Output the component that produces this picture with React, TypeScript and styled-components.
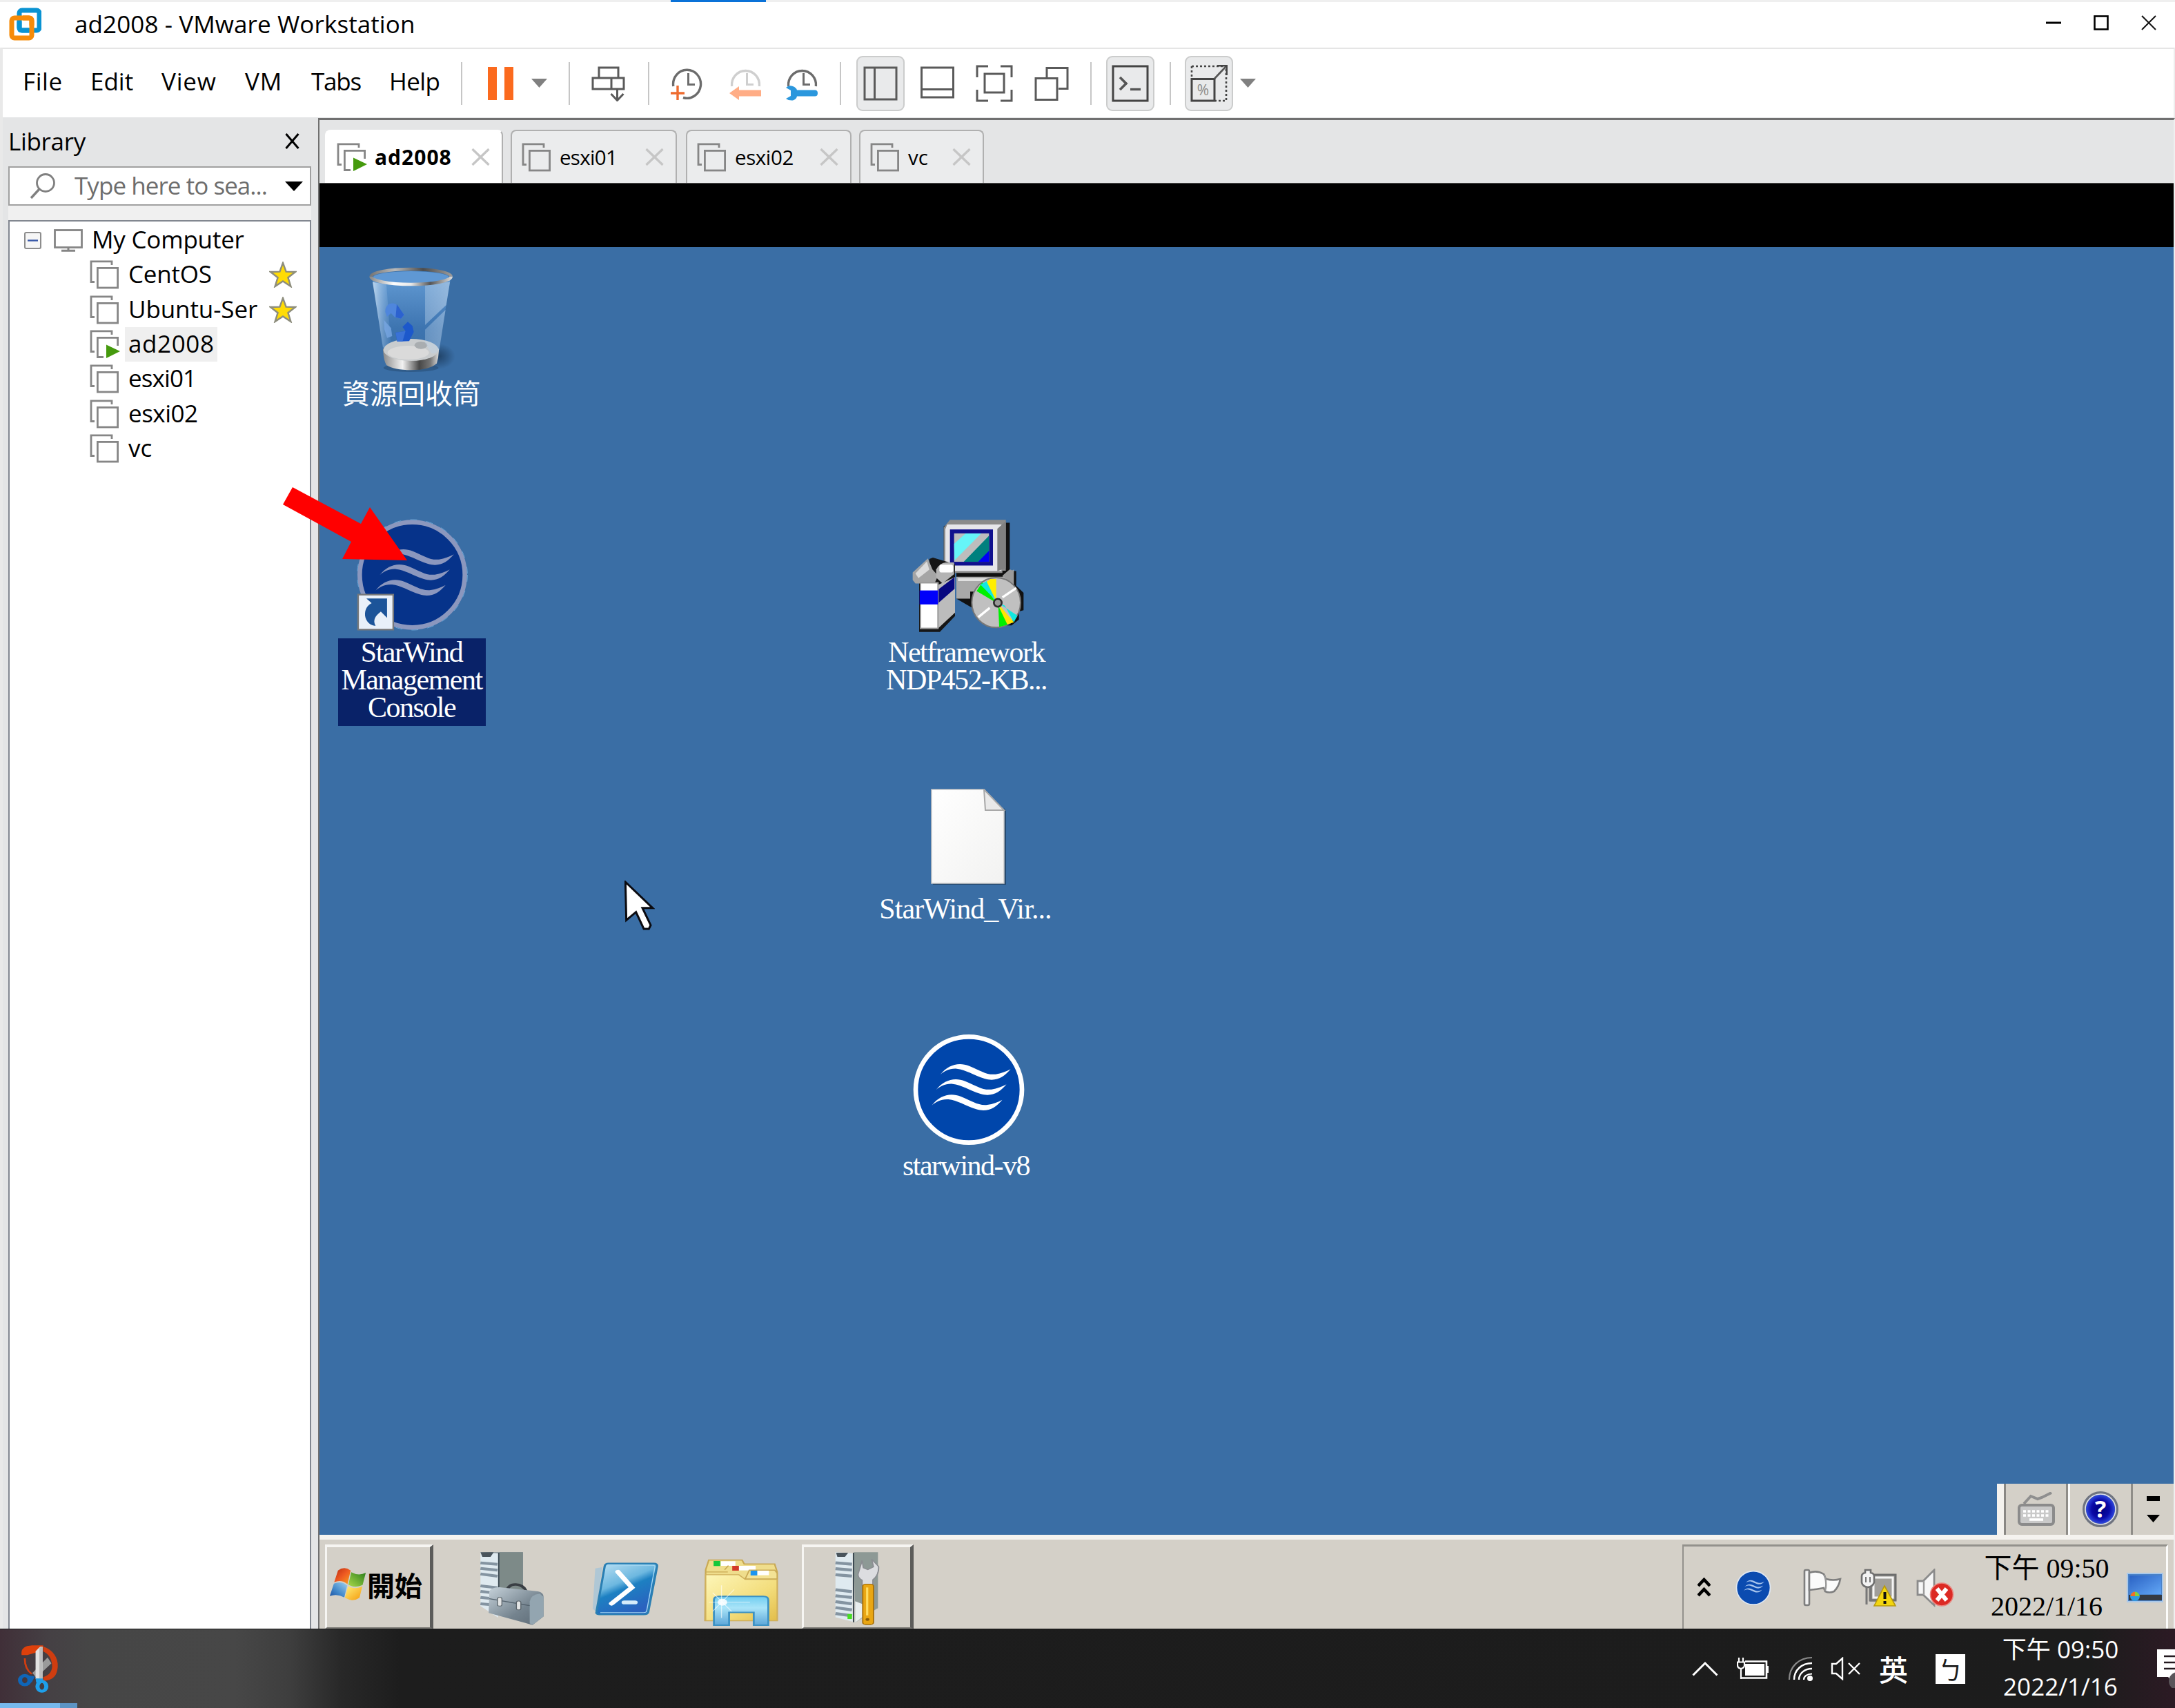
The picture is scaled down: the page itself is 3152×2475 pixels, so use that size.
import React from 'react';
import styled, { createGlobalStyle, css } from 'styled-components';

const GlobalStyle = createGlobalStyle`
  * { box-sizing: border-box; }
  html, body { margin: 0; padding: 0; background: #fff; }
  body { font-family: 'Open Sans', 'Noto Sans CJK TC', sans-serif; font-size: 35px; color: #000; }
  svg { display: block; flex: none; }
`;

/* ---------- shared pieces ---------- */

const Screen = styled.div`
  position: relative;
  display: flex;
  flex-direction: column;
  width: 3152px;
  height: 2475px;
  overflow: hidden;
`;

const Label = styled.span<{ $ls?: number }>`
  white-space: nowrap;
  letter-spacing: ${(p) => p.$ls ?? 0}px;
`;

const Slot = styled.div<{ $ml: number; $w?: number }>`
  flex: none;
  display: flex;
  align-items: center;
  justify-content: center;
  margin-left: ${(p) => p.$ml}px;
  ${(p) => p.$w && css`width: ${p.$w}px;`}
`;

const Spacer = styled.div`
  flex: 1;
`;

type ArtProps = { w: number; h: number; box?: string; children: React.ReactNode };
const Art = ({ w, h, box, children }: ArtProps) => (
  <svg width={w} height={h} viewBox={box ?? `0 0 ${w} ${h}`} preserveAspectRatio="none" fill="none">
    {children}
  </svg>
);

/* ---------- title bar ---------- */

const TopStrip = styled.div`
  flex: none;
  display: flex;
  height: 3px;
  background: #efefef;
`;

const ActiveMark = styled.div`
  width: 138px;
  margin-left: 972px;
  background: #0a72d8;
`;

const TitleBar = styled.header`
  flex: none;
  display: flex;
  align-items: center;
  height: 66px;
  padding: 0 27px 2px 13px;
  background: #fff;
`;

const TitleText = styled(Label)`
  margin-left: 48px;
  font-size: 35px;
  line-height: 48px;
`;

const WindowButtons = styled.div`
  display: flex;
  align-items: center;
  gap: 47px;
  margin-left: auto;
  padding-bottom: 4px;
`;

const VmwareLogo = () => (
  <Art w={47} h={48}>
    <rect x="15" y="4" width="29" height="29" rx="4" stroke="#0a93d2" strokeWidth="7" />
    <rect x="4" y="15" width="29" height="29" rx="4" stroke="#f68b09" strokeWidth="7" />
    <path d="M15 20V29Q15 33 19 33H29" stroke="#0a93d2" strokeWidth="7" />
    <path d="M20 15H29Q33 15 33 19V26" stroke="#f68b09" strokeWidth="7" />
  </Art>
);

/* ---------- menu and toolbar ---------- */

const Toolbar = styled.nav`
  flex: none;
  display: flex;
  align-items: center;
  height: 101px;
  padding: 0 0 0 28px;
  border-top: 2px solid #e5e5e5;
  border-left: 4px solid #e9e9e9;
  border-right: 2px solid #ededed;
  background: #fff;
`;

const MenuItem = styled.div<{ $w: number }>`
  flex: none;
  width: ${(p) => p.$w}px;
  padding: 0 0 5px 1px;
  line-height: 48px;
`;

const Separator = styled.div<{ $ml: number }>`
  flex: none;
  width: 2px;
  height: 62px;
  margin-left: ${(p) => p.$ml}px;
  background: #c6c6c6;
`;

const Pressed = styled.div<{ $ml: number }>`
  flex: none;
  display: flex;
  align-items: center;
  justify-content: center;
  width: 70px;
  height: 80px;
  margin-left: ${(p) => p.$ml}px;
  border: 2px solid #cbcccc;
  border-radius: 9px;
  background: #e9eaeb;
`;

const Caret = ({ color = '#808080', w = 23, h = 13 }) => (
  <Art w={w} h={h}>
    <path d={`M0 0H${w}L${w / 2} ${h}Z`} fill={color} />
  </Art>
);

const INK = '#5a5a5a';

const ClockFace = ({ color, full }: { color: string; full?: boolean }) => (
  <>
    <path
      d={full ? 'M5.8 29A20 20.5 0 1 1 20 45.5' : 'M5.6 29A20 20.5 0 1 1 45.4 29'}
      stroke={color}
      strokeWidth="3.4"
    />
    <path d="M27.5 10V26.5H37" stroke={color} strokeWidth="3" />
  </>
);

/* ---------- library ---------- */

const Main = styled.main`
  flex: 1;
  display: flex;
  min-height: 0;
  background: #e4e5e6;
`;

const Library = styled.aside`
  flex: none;
  display: flex;
  flex-direction: column;
  width: 461px;
  padding: 0 10px 0 8px;
  border-left: 4px solid #e9e9e9;
`;

const LibraryHeader = styled.div`
  display: flex;
  align-items: center;
  justify-content: space-between;
  height: 71px;
  padding: 0 17px 2px 0;
`;

const SearchBox = styled.div`
  flex: none;
  display: flex;
  align-items: center;
  height: 57px;
  padding-left: 29px;
  border: 2px solid #a0a0a0;
  background: #fff;
  color: #6d6d6d;
`;

const SearchHint = styled(Label)`
  width: 305px;
  margin-left: 27px;
  padding-bottom: 1px;
  line-height: 46px;
`;

const SearchGap = styled.div`
  flex: none;
  height: 21px;
  background: #f0f0f0;
`;

const Tree = styled.div`
  flex: 1;
  padding-top: 2px;
  border: 2px solid #828790;
  border-bottom: 0;
  background: #fff;
`;

const TreeRow = styled.div<{ $indent: number }>`
  display: flex;
  align-items: center;
  height: 50.3px;
  padding-left: ${(p) => p.$indent}px;
`;

const TreeText = styled(Label)<{ $selected?: boolean; $ml?: number }>`
  margin-left: ${(p) => p.$ml ?? 9}px;
  padding: 0 4px 3px 5px;
  line-height: 47px;
  background: ${(p) => (p.$selected ? '#efefef' : 'transparent')};
`;

const StarSlot = styled.div`
  margin-left: auto;
  margin-right: 19px;
`;

const VmIcon = ({ running }: { running?: boolean }) => (
  <Art w={44} h={42}>
    <path d="M7 31.5H2V1.8H32V7" stroke="#868686" strokeWidth="2.8" />
    {running ? (
      <>
        <path d="M20 39.5H11.4V11.4H40.6V23" stroke="#868686" strokeWidth="2.8" />
        <path d="M24 21.5L44 31L24 41Z" fill="#459a0d" />
      </>
    ) : (
      <rect x="11.4" y="11.4" width="29.2" height="28.6" stroke="#868686" strokeWidth="2.8" />
    )}
  </Art>
);

const Star = () => (
  <Art w={40} h={38}>
    <path
      d="M20 2L24.6 14.6L38 15L27.4 23.2L31.4 36L20 28.4L8.6 36L12.6 23.2L2 15L15.4 14.6Z"
      fill="#ffdc05"
      stroke="#8d8d7c"
      strokeWidth="2.4"
    />
  </Art>
);

/* ---------- guest pane ---------- */

const Pane = styled.section`
  flex: none;
  display: flex;
  flex-direction: column;
  width: 2691px;
  margin-top: 1px;
  border-top: 3px solid #707070;
  border-left: 2px solid #707070;
  border-right: 2px solid #efefef;
`;

const Tabs = styled.div`
  flex: none;
  display: flex;
  align-items: flex-end;
  height: 92px;
  padding-left: 8px;
  border-bottom: 1px solid #555;
`;

const Tab = styled.div<{ $w: number; $gap: number; $active?: boolean }>`
  display: flex;
  align-items: center;
  width: ${(p) => p.$w}px;
  height: 77px;
  margin-right: ${(p) => p.$gap}px;
  padding: 0 17px 0 ${(p) => (p.$active ? 15 : 14)}px;
  border: 2px solid #b0b0b0;
  border-bottom: 0;
  border-radius: 8px 8px 0 0;
  background: ${(p) => (p.$active ? '#fff' : '#ebeced')};
  font-size: ${(p) => (p.$active ? 30 : 29.5)}px;
  font-weight: ${(p) => (p.$active ? 700 : 400)};
  ${(p) => p.$active && css`border-color: #fff #b0b0b0 #fff #fff;`}
`;

const TabText = styled(Label)`
  flex: 1;
  margin-left: 11px;
  line-height: 40px;
`;

const CloseX = ({ w, h, color, sw = 3 }: { w: number; h: number; color: string; sw?: number }) => (
  <Art w={w} h={h}>
    <path d={`M1.5 1L${w - 1.5} ${h - 1}M${w - 1.5} 1L1.5 ${h - 1}`} stroke={color} strokeWidth={sw} />
  </Art>
);

const Letterbox = styled.div`
  flex: none;
  height: 92px;
  background: #000;
`;

const Desktop = styled.div`
  position: relative;
  flex: none;
  height: 1866px;
  background: #3a6ea5;
`;

const DesktopItem = styled.div<{ $x: number; $y: number }>`
  position: absolute;
  left: ${(p) => p.$x - 150}px;
  top: ${(p) => p.$y}px;
  display: flex;
  flex-direction: column;
  align-items: center;
  width: 300px;
`;

const ItemLabel = styled.div<{ $mt: number; $mr?: number; $ls?: number; $selected?: boolean; $cjk?: boolean }>`
  margin-top: ${(p) => p.$mt}px;
  margin-right: ${(p) => p.$mr ?? 0}px;
  padding: ${(p) => (p.$selected ? '0 5px 7px 4px' : '0')};
  background: ${(p) => (p.$selected ? '#092268' : 'transparent')};
  color: #fff;
  font-family: ${(p) => (p.$cjk ? "'Noto Sans CJK TC'" : "'Liberation Serif', 'Noto Sans CJK TC'")}, serif;
  font-size: ${(p) => (p.$cjk ? 40 : 42)}px;
  line-height: 40px;
  letter-spacing: ${(p) => p.$ls ?? -1.5}px;
  text-align: center;
  white-space: pre;
`;

const WAVE =
  'M450 432C485 388 530 376 576 394C625 414 650 434 690 430C715 427 735 418 755 408C725 444 690 464 642 449C592 432 560 410 522 406C490 404 470 415 450 432Z';

const Waves = ({ color }: { color: string }) => (
  <g fill={color}>
    <path d={WAVE} transform="translate(18 -66)" />
    <path d={WAVE} />
    <path d={WAVE} transform="translate(-18 67)" />
  </g>
);

const StarWindSelected = () => (
  <Art w={161} h={163} box="350 188 484 489">
    <circle cx="592" cy="431" r="229" fill="#06338a" stroke="#8b97be" strokeWidth="20" />
    <circle cx="592" cy="431" r="240" stroke="#6aa5d5" strokeWidth="3" strokeDasharray="30 40" />
    <Waves color="#8b97be" />
    <rect x="356" y="517" width="153" height="152" fill="#e9f0f9" stroke="#77787a" strokeWidth="7" />
    <path
      d="M392 534H482V618L455 591C432 608 418 628 432 653C400 650 384 622 386 598C388 574 402 560 415 554Z"
      fill="#1c5499"
    />
  </Art>
);

const StarWindRound = ({ w, h }: { w: number; h: number }) => (
  <Art w={w} h={h} box="350 188 484 489">
    <circle cx="592" cy="431" r="230" fill="#0046ab" stroke="#fff" strokeWidth="20" />
    <Waves color="#fff" />
  </Art>
);

const RecycleBin = () => (
  <Art w={126} h={153} box="230 140 378 459">
    <defs>
      <linearGradient id="rim" x1="0" x2="1">
        <stop offset="0" stopColor="#8d8d8d" />
        <stop offset=".28" stopColor="#fdfdfd" />
        <stop offset=".5" stopColor="#e8e8e8" />
        <stop offset=".74" stopColor="#555" />
        <stop offset="1" stopColor="#d5d5d5" />
      </linearGradient>
      <linearGradient id="rimBack" x1="0" x2="1">
        <stop offset="0" stopColor="#777" />
        <stop offset=".3" stopColor="#b9b9b9" />
        <stop offset=".65" stopColor="#4c4c4c" />
        <stop offset="1" stopColor="#999" />
      </linearGradient>
      <linearGradient id="base" x1="0" x2="1">
        <stop offset="0" stopColor="#8a8a8a" />
        <stop offset=".35" stopColor="#f2f2f2" />
        <stop offset=".65" stopColor="#474747" />
        <stop offset=".85" stopColor="#777" />
        <stop offset="1" stopColor="#ddd" />
      </linearGradient>
      <linearGradient id="glass" x1="0" y1="0" x2="0" y2="1">
        <stop offset="0" stopColor="#5f97d0" />
        <stop offset=".6" stopColor="#3d74b0" />
        <stop offset="1" stopColor="#3a6ea5" />
      </linearGradient>
      <linearGradient id="shineL" x1="0" x2="1">
        <stop offset="0" stopColor="#dcebf8" stopOpacity=".75" />
        <stop offset="1" stopColor="#9cc3ea" stopOpacity=".08" />
      </linearGradient>
      <linearGradient id="shineR" x1="0" x2="1">
        <stop offset="0" stopColor="#bcd3ea" stopOpacity=".4" />
        <stop offset="1" stopColor="#bcd3ea" stopOpacity=".6" />
      </linearGradient>
      <radialGradient id="binShade">
        <stop offset="0" stopColor="#1d3d60" stopOpacity=".9" />
        <stop offset="1" stopColor="#1d3d60" stopOpacity="0" />
      </radialGradient>
    </defs>
    <ellipse cx="530" cy="528" rx="74" ry="56" fill="url(#binShade)" />
    <ellipse cx="412" cy="578" rx="120" ry="18" fill="#23476d" opacity=".5" />
    <path d="M245 195L290 500Q412 600 533 500L583 195Z" fill="url(#glass)" />
    <path d="M245 205L290 490L325 480L305 215Z" fill="url(#shineL)" />
    <path d="M290 495Q292 545 305 566Q340 588 412 588Q495 588 524 558Q533 530 533 495Z" fill="url(#base)" />
    <ellipse cx="412" cy="500" rx="120" ry="48" fill="#c9ccce" />
    <ellipse cx="400" cy="512" rx="90" ry="30" fill="#dadada" />
    <ellipse cx="455" cy="480" rx="28" ry="16" fill="#a9adb0" />
    <path d="M473 212L581 205L565 305L473 392Z" fill="url(#shineR)" />
    <path d="M473 412L562 326L535 498Q520 520 500 515L473 470Z" fill="url(#shineR)" opacity=".8" />
    <path d="M300 335C300 305 320 292 345 300L383 348L368 364L342 358L325 340L308 356Z" fill="#4f86dc" />
    <path d="M350 302L382 348L368 364L345 358Z" fill="#2c62cf" />
    <path d="M398 378L375 400L388 418L345 425L352 464L404 462L424 422L418 396Z" fill="#1c58cb" />
    <path d="M345 425L388 418L375 464H352Z" fill="#3a72d6" />
    <path d="M294 370L325 405L330 440L308 448L296 410Z" fill="#78a6e2" opacity=".8" />
    <path d="M238 181A174 32 0 0 1 586 181" stroke="url(#rimBack)" strokeWidth="13" />
    <ellipse cx="412" cy="183" rx="164" ry="25" fill="#5f98d4" />
    <path d="M238 181A174 34 0 0 0 586 181" stroke="url(#rim)" strokeWidth="14" />
  </Art>
);

const Installer = () => (
  <Art w={165} h={165} box="245 68 495 489">
    <path d="M410 84H672V290L700 292V355L732 385V460L712 465V500L680 525H640L440 410V300L385 255V100Z" fill="#111" />
    <path d="M385 104L412 72H655V290H640V300H385Z" fill="#8b8b8b" />
    <path d="M400 92H636V292H392V112Z" fill="#e6e6ea" />
    <path d="M618 110L655 78V280L618 292Z" fill="#808080" />
    <rect x="412" y="113" width="187" height="155" fill="#10108e" />
    <rect x="430" y="130" width="152" height="122" fill="#bdbdbd" />
    <path d="M430 175L480 130H548L432 246Z" fill="#66f5f8" />
    <path d="M582 140V252H472Z" fill="#00807e" />
    <path d="M582 204V252H535Z" fill="#0000f5" />
    <path d="M440 316H640L690 285L684 380H500V410H440Z" fill="#a9a9a9" />
    <path d="M640 312L672 284L690 292V350Z" fill="#9a9a9a" />
    <path d="M447 322H600L560 335H447Z" fill="#e0e0e0" />
    <ellipse cx="613" cy="427" rx="106" ry="107" fill="#c0c0c0" stroke="#777" strokeWidth="6" />
    <path d="M613 427L528 378L552 340Z" fill="#00f000" />
    <path d="M613 420L545 350L572 335Z" fill="#10e8e0" />
    <path d="M613 420L572 338L588 326H613Z" fill="#ffee00" />
    <path d="M620 427L705 483L690 512L650 440Z" fill="#10e8e0" />
    <path d="M622 432L690 512L655 522Z" fill="#ffe600" />
    <path d="M622 440L662 522L626 532Z" fill="#00f000" />
    <path d="M640 405L700 365M585 450L535 490" stroke="#fff" strokeWidth="10" />
    <circle cx="620" cy="428" r="17" fill="#999" stroke="#2d2d2d" strokeWidth="8" />
    <path d="M278 553H368L434 485V262L338 234L322 240V270L278 330Z" fill="#161616" />
    <path d="M250 298L316 238L336 285L360 312L345 345H262L250 330Z" fill="#a5a5a5" />
    <path d="M262 302L312 250L322 286L275 322Z" fill="#dcdcdc" />
    <path d="M352 285Q370 255 395 255H430V305L380 345L352 320Z" fill="#b4b4b4" />
    <rect x="366" y="264" width="60" height="34" rx="10" fill="#fff" />
    <path d="M362 350L434 318V470L362 536Z" fill="#bcbcbc" />
    <path d="M360 372L432 318V368L360 430Z" fill="#080880" />
    <rect x="284" y="342" width="76" height="196" fill="#fff" stroke="#9a9a9a" strokeWidth="6" />
    <rect x="280" y="375" width="80" height="60" fill="#0000fa" />
  </Art>
);

const BlankFile = () => (
  <Art w={110} h={140}>
    <defs>
      <linearGradient id="paper" x1="0" y1="0" x2="1" y2="1">
        <stop offset="0" stopColor="#fff" />
        <stop offset="1" stopColor="#f2f2f1" />
      </linearGradient>
    </defs>
    <path d="M3 139H109V32L106 28V136H3Z" fill="#274b70" />
    <path d="M1 1H77L106 31V137H1Z" fill="url(#paper)" stroke="#c9c9c9" strokeWidth="1.5" />
    <path d="M77 1L106 31H79Z" fill="#e9e9e9" stroke="#a8a8a8" strokeWidth="2" />
  </Art>
);

const Cursor = styled.div`
  position: absolute;
  left: 442px;
  top: 918px;
`;

const LanguageBar = styled.div`
  position: absolute;
  right: 0;
  bottom: 0;
  display: flex;
  align-items: center;
  width: 256px;
  height: 74px;
  background: #d4d0c8;
  border-left: 10px solid #f4f2ee;
`;

const BarCell = styled.div<{ $w: number; $first?: boolean }>`
  display: flex;
  flex-direction: column;
  align-items: center;
  justify-content: center;
  width: ${(p) => p.$w}px;
  height: 74px;
  border-left: ${(p) => (p.$first ? '3px solid #8a8884' : '3px solid #fbfbfa')};
  border-right: 3px solid #8f8d88;
`;

/* ---------- guest taskbar ---------- */

const GuestTaskbar = styled.div`
  flex: 1;
  display: flex;
  align-items: flex-end;
  min-height: 0;
  padding-right: 8px;
  border-top: 7px solid #f5f3ef;
  background: #d4d0c8;
`;

const raised = css`
  border-style: solid;
  border-width: 4px 5px 2px 3px;
  border-color: #f6f5f2 #5c5c5a #7d7b77 #f6f5f2;
`;

const StartButton = styled.button`
  ${raised}
  flex: none;
  display: flex;
  align-items: center;
  width: 157px;
  height: 122px;
  margin: 0 0 0 8px;
  padding: 0 0 9px 3px;
  background: #d4d0c8;
  color: #000;
  font: 700 40px/44px 'Noto Sans CJK TC', sans-serif;
`;

const StartText = styled.span`
  margin-left: 1px;
  white-space: nowrap;
`;

const TaskSlot = styled.div<{ $ml: number; $drop: number; $pressed?: boolean }>`
  flex: none;
  display: flex;
  align-items: flex-start;
  justify-content: center;
  height: 122px;
  margin-left: ${(p) => p.$ml}px;
  ${(p) => p.$pressed && css`${raised} width: 162px;`}
  padding-top: ${(p) => p.$drop}px;
`;

const GuestTray = styled.div`
  flex: none;
  display: flex;
  align-items: center;
  width: 704px;
  height: 122px;
  border-top: 3px solid #93918c;
  border-left: 2px solid #93918c;
  border-right: 3px solid #fbfbfa;
`;

const GuestClock = styled.div`
  width: 200px;
  margin-left: 34px;
  padding-bottom: 2px;
  font-family: 'Liberation Serif', 'Noto Sans CJK TC', serif;
  font-size: 40px;
  line-height: 55px;
  text-align: center;
  white-space: nowrap;
`;

const ServerTower = () => (
  <>
    <path d="M82 116H215V350L140 355L82 350Z" fill="#7f8d93" />
    <path d="M140 116H214V352H140Z" fill="#7d8a88" />
    <path d="M80 116L136 120V400L80 350Z" fill="#dfeaf0" />
    <path d="M80 116H122L112 136H86Z" fill="#49545c" />
    <path
      d="M80 162L134 168M80 186L134 194M80 210L134 220M80 262L134 270M80 286L134 294M80 312L134 320M80 340L134 346"
      stroke="#8494a1"
      strokeWidth="12"
    />
    <path d="M138 118V350" stroke="#3c4a53" strokeWidth="4" />
  </>
);

const ServerManager = () => (
  <Art w={96} h={108} box="75 112 210 324">
    <defs>
      <linearGradient id="toolbox" x1="0" y1="0" x2="1" y2="1">
        <stop offset="0" stopColor="#c6d2da" />
        <stop offset=".6" stopColor="#74838e" />
        <stop offset="1" stopColor="#5c6a75" />
      </linearGradient>
    </defs>
    <ServerTower />
    <path d="M162 290Q168 254 192 256Q224 258 228 306" stroke="#3a3f44" strokeWidth="10" />
    <path d="M108 288Q112 268 140 268L262 286Q280 290 280 310V395L245 432L106 380Z" fill="url(#toolbox)" />
    <path d="M236 330Q240 300 268 296L280 310V395L245 432L236 425Z" fill="#93a5b0" />
    <path d="M108 318L236 348" stroke="#55636e" strokeWidth="4" />
    <rect x="134" y="312" width="14" height="38" rx="6" fill="#e2e4e4" stroke="#59636a" strokeWidth="3" />
    <rect x="194" y="328" width="14" height="38" rx="6" fill="#e2e4e4" stroke="#59636a" strokeWidth="3" />
  </Art>
);

const PowerShell = () => (
  <Art w={97} h={80} box="430 156 212 240">
    <defs>
      <linearGradient id="ps" x1="0" y1="0" x2=".5" y2="1">
        <stop offset="0" stopColor="#bfe2f4" />
        <stop offset=".45" stopColor="#6db8e0" />
        <stop offset=".58" stopColor="#1d80c2" />
        <stop offset="1" stopColor="#2a62bf" />
      </linearGradient>
    </defs>
    <path d="M440 185L462 180L444 375L432 360Z" fill="#8fbfe0" opacity=".55" />
    <path
      d="M482 164H626Q637 164 636 176L608 374Q606 385 594 385H452Q442 385 444 374L470 176Q472 164 482 164Z"
      fill="url(#ps)"
      stroke="#2a7fb3"
      strokeWidth="7"
    />
    <path d="M482 172H624Q630 172 629 180L603 370Q602 377 594 377H456" stroke="#a5d8f2" strokeWidth="3" />
    <path d="M512 200L556 268L492 338" stroke="#fff" strokeWidth="17" strokeLinecap="round" />
    <path d="M532 333H566" stroke="#d6ecfa" strokeWidth="17" strokeLinecap="round" />
  </Art>
);

const Explorer = () => (
  <Art w={110} h={99} box="782 140 240 298">
    <defs>
      <linearGradient id="folder" x1="0" y1="0" x2="1" y2="1">
        <stop offset="0" stopColor="#fdf6b8" />
        <stop offset=".6" stopColor="#f3dd7c" />
        <stop offset="1" stopColor="#e2bd4a" />
      </linearGradient>
      <linearGradient id="stand" x1="0" y1="0" x2="0" y2="1">
        <stop offset="0" stopColor="#6fcdf0" />
        <stop offset=".4" stopColor="#a9e4f8" />
        <stop offset="1" stopColor="#5da6d8" />
      </linearGradient>
    </defs>
    <path d="M790 190L800 148H905L912 165H1008L1016 200V412H788Z" fill="#efdd8c" stroke="#c9a954" strokeWidth="5" />
    <path d="M838 163H884" stroke="#fff" strokeWidth="20" />
    <rect x="815" y="152" width="21" height="22" fill="#14c83a" />
    <path d="M850 190L862 172M792 200H860" stroke="#c9a954" strokeWidth="4" />
    <path d="M895 183H948" stroke="#fff" strokeWidth="20" />
    <rect x="874" y="173" width="21" height="21" fill="#d23a2a" />
    <path d="M790 212H895L915 232H1016V412H790Z" fill="url(#folder)" stroke="#d0b05c" strokeWidth="4" />
    <path d="M915 230L928 192H1008L1016 205V230Z" fill="#f3e295" stroke="#c9a954" strokeWidth="4" />
    <path d="M953 204H990" stroke="#fff" strokeWidth="20" />
    <rect x="932" y="194" width="21" height="21" fill="#1a94f0" />
    <path
      d="M816 432V322Q816 306 832 306H972Q988 306 988 322V432H942V376H864V432Z"
      fill="url(#stand)"
      stroke="#3c92c4"
      strokeWidth="6"
    />
    <path d="M840 258V400M800 332H930M812 290L872 372M880 276L812 372" stroke="#fff" strokeWidth="3" opacity=".6" />
    <circle cx="843" cy="332" r="15" fill="#fff" opacity=".85" />
  </Art>
);

const ServerTools = () => (
  <Art w={68} h={108} box="1194 112 148 326">
    <path d="M1258 116H1334V360L1262 424Z" fill="#8d9995" />
    <path d="M1262 330L1290 345V395L1262 424Z" fill="#e8eeee" />
    <path d="M1200 116L1254 120V420L1200 400Z" fill="#dfeaf0" />
    <path d="M1202 118H1240L1230 136H1206Z" fill="#49545c" />
    <path
      d="M1200 162L1252 168M1200 188L1252 194M1200 214L1252 220M1200 280L1252 288M1200 306L1252 314M1200 332L1252 342M1200 358L1252 368M1200 384L1252 394"
      stroke="#8494a1"
      strokeWidth="13"
    />
    <path d="M1257 118V422" stroke="#34424b" strokeWidth="4" />
    <rect x="1238" y="386" width="14" height="22" fill="#45df22" />
    <path
      d="M1284 152L1272 208Q1268 226 1284 238V262H1318V236Q1338 214 1336 178L1314 146L1320 180L1302 192L1288 184Z"
      fill="#dcdde0"
      stroke="#8b8d92"
      strokeWidth="4"
    />
    <rect x="1286" y="256" width="34" height="176" rx="9" fill="#e9a613" stroke="#a87008" strokeWidth="4" />
    <path d="M1300 270V392" stroke="#ffdd62" strokeWidth="7" />
    <circle cx="1301" cy="410" r="6" fill="#8a5d08" />
  </Art>
);

const WindowsFlag = () => (
  <Art w={54} h={49} box="1036 188 118 148">
    <defs>
      <linearGradient id="fr" x1="0" y1="0" x2="1" y2="1"><stop offset="0" stopColor="#b92a10" /><stop offset=".5" stopColor="#ee5a22" /><stop offset="1" stopColor="#f9a21c" /></linearGradient>
      <linearGradient id="fg" x1="1" y1="0" x2="0" y2="1"><stop offset="0" stopColor="#2c7f1c" /><stop offset="1" stopColor="#a9d94a" /></linearGradient>
      <linearGradient id="fb" x1="1" y1="0" x2="0" y2="1"><stop offset="0" stopColor="#9dd0ee" /><stop offset=".6" stopColor="#3f86c9" /><stop offset="1" stopColor="#1c4fa0" /></linearGradient>
      <linearGradient id="fy" x1="0" y1="0" x2="1" y2="1"><stop offset="0" stopColor="#fff07a" /><stop offset="1" stopColor="#f59a0a" /></linearGradient>
    </defs>
    <path d="M1064 202Q1084 182 1104 202L1094 262Q1074 240 1052 254Z" fill="url(#fr)" />
    <path d="M1106 210Q1130 228 1152 212L1142 266Q1118 282 1097 264Z" fill="url(#fg)" />
    <path d="M1051 260Q1074 246 1093 268L1084 320Q1062 302 1038 314Z" fill="url(#fb)" />
    <path d="M1096 270Q1118 288 1141 272L1132 322Q1112 342 1086 322Z" fill="url(#fy)" />
  </Art>
);

/* ---------- host taskbar ---------- */

const HostTaskbar = styled.footer`
  flex: none;
  display: flex;
  align-items: center;
  height: 115px;
  border-top: 1px solid #1a1a1a;
  background: linear-gradient(
    90deg,
    #402f38 0,
    #454044 70px,
    #464646 130px,
    #474747 340px,
    #3e3e3e 420px,
    #282828 495px,
    #1d1d1d 580px,
    #1c1c1c 3030px,
    #2c1a24 3152px
  );
  color: #fff;
`;

const PinnedApp = styled.div`
  display: flex;
  flex-direction: column;
  align-items: flex-start;
  justify-content: space-between;
  align-self: stretch;
  padding: 21px 0 0;

  svg { margin-left: 24px; }
`;

const RunningMark = styled.div`
  width: 112px;
  height: 7px;
  border-right: 25px solid #5c94c4;
  background: #76b9ed;
`;

const HostClock = styled.div`
  width: 180px;
  margin-left: 48px;
  padding-bottom: 3px;
  line-height: 54px;
  text-align: center;
  white-space: nowrap;
`;

const InputMode = styled.div`
  margin-left: 26px;
  width: 42px;
  font: 500 42px/50px 'Noto Sans CJK TC', sans-serif;
  text-align: center;
`;

const ImeBox = styled.div`
  display: flex;
  align-items: center;
  justify-content: center;
  width: 43px;
  height: 43px;
  margin-left: 40px;
  background: #fff;
  color: #1c1c1c;
  font: 400 36px/43px 'Noto Sans CJK TC', sans-serif;
`;

const PointerArrow = styled.div`
  position: absolute;
  left: 410px;
  top: 705px;
`;

/* ---------- data ---------- */

const MENU: [string, number, number][] = [
  ['File', 98, 0.6],
  ['Edit', 103, 0],
  ['View', 121, 0.8],
  ['VM', 96, 0.8],
  ['Tabs', 113, -1.2],
  ['Help', 105, -0.6],
];

const MACHINES = [
  { name: 'CentOS', star: true, ls: -0.2 },
  { name: 'Ubuntu-Ser', star: true, ls: -0.1 },
  { name: 'ad2008', running: true, ls: 0.6 },
  { name: 'esxi01', ls: -0.9 },
  { name: 'esxi02', ls: -0.5 },
  { name: 'vc', ls: 0 },
];

const TABS = [
  { name: 'ad2008', w: 258, gap: 11, active: true, ls: 1 },
  { name: 'esxi01', w: 241, gap: 13, ls: -0.7 },
  { name: 'esxi02', w: 240, gap: 11, ls: -0.4 },
  { name: 'vc', w: 181, gap: 0, ls: 0 },
];

export default function App() {
  return (
    <Screen>
      <GlobalStyle />
      <TopStrip>
        <ActiveMark />
      </TopStrip>

      <TitleBar>
        <VmwareLogo />
        <TitleText $ls={0.1}>ad2008 - VMware Workstation</TitleText>
        <WindowButtons>
          <Art w={22} h={22}><path d="M0 11H22" stroke="#000" strokeWidth="3" /></Art>
          <Art w={22} h={22}><rect x="1.5" y="1.5" width="19" height="19" stroke="#000" strokeWidth="2.6" /></Art>
          <Art w={22} h={22}><path d="M1 1L21 21M21 1L1 21" stroke="#111" strokeWidth="2" /></Art>
        </WindowButtons>
      </TitleBar>

      <Toolbar>
        {MENU.map(([text, w, ls]) => (
          <MenuItem key={text} $w={w}><Label $ls={ls}>{text}</Label></MenuItem>
        ))}
        <Separator $ml={0} />
        <Slot $ml={37}>
          <Art w={37} h={48}><path d="M0 0H13V48H0ZM24 0H37V48H24Z" fill="#fb6a1e" /></Art>
        </Slot>
        <Slot $ml={26}><Caret /></Slot>
        <Separator $ml={31} />
        <Slot $ml={31}>
          <Art w={50} h={52}>
            <g stroke={INK} strokeWidth="3">
              <path d="M11 18V3H39V18" />
              <rect x="2" y="18" width="45" height="16" />
              <path d="M29 18V34M37.5 34V50M28.5 41L37.5 50.5L46.5 41" />
            </g>
          </Art>
        </Slot>
        <Separator $ml={32} />
        <Slot $ml={29}>
          <Art w={50} h={50}>
            <ClockFace color="#6c6c6c" full />
            <path d="M2 39H22M12 28V49" stroke="#ee6c30" strokeWidth="3.4" />
          </Art>
        </Slot>
        <Slot $ml={35}>
          <Art w={50} h={50}>
            <ClockFace color="#cfcfcf" />
            <path d="M2 39L16 29V34.5H48V43.5H16V49Z" fill="#ffad86" />
          </Art>
        </Slot>
        <Slot $ml={32}>
          <Art w={50} h={50}>
            <ClockFace color="#6c6c6c" />
            <path d="M2 31Q6 27 12 29Q17 31 18 34.5H44Q48 34.5 48 39Q48 43.5 44 43.5H18Q17 48 12 49.5Q6 50 2 47L9 43V35Z" fill="#2b97dd" />
          </Art>
        </Slot>
        <Separator $ml={30} />
        <Pressed $ml={22}>
          <Art w={50} h={50}>
            <rect x="2" y="2" width="46" height="46" stroke={INK} strokeWidth="3" />
            <path d="M16.5 2V48" stroke={INK} strokeWidth="3" />
          </Art>
        </Pressed>
        <Slot $ml={23}>
          <Art w={49} h={50}>
            <rect x="1.5" y="2" width="46" height="43" stroke={INK} strokeWidth="3" />
            <path d="M2 33.5H48" stroke={INK} strokeWidth="3" />
          </Art>
        </Slot>
        <Slot $ml={31}>
          <Art w={54} h={54}>
            <path d="M2 18V2H18M36 2H52V18M52 36V52H36M18 52H2V36" stroke={INK} strokeWidth="3" />
            <rect x="13" y="13" width="28" height="27" stroke={INK} strokeWidth="3" />
          </Art>
        </Slot>
        <Slot $ml={31}>
          <Art w={50} h={50}>
            <path d="M18 17V2.5H48V32.5H35" stroke={INK} strokeWidth="3" />
            <rect x="2" y="17.5" width="31" height="31" stroke={INK} strokeWidth="3" />
          </Art>
        </Slot>
        <Separator $ml={31} />
        <Pressed $ml={21}>
          <Art w={54} h={54}>
            <rect x="2" y="2" width="50" height="50" stroke="#444" strokeWidth="3" />
            <path d="M12 18L21 27L12 36" stroke="#555" strokeWidth="3.6" />
            <path d="M27 35.5H42" stroke="#555" strokeWidth="3.4" />
          </Art>
        </Pressed>
        <Separator $ml={22} />
        <Pressed $ml={20}>
          <Art w={54} h={54}>
            <path d="M2 2H52V52H36M2 2V20" stroke="#444" strokeWidth="2.6" strokeDasharray="3 3" />
            <rect x="2" y="20.5" width="33" height="31.5" stroke="#444" strokeWidth="3" />
            <path d="M35 20L51 3" stroke="#555" strokeWidth="2.6" />
            <path d="M39 1H53V15" stroke="#444" strokeWidth="3" />
            <text x="18.5" y="44" fontSize="21" fontFamily="Open Sans, sans-serif" fill="#8a8a8a" textAnchor="middle">%</text>
          </Art>
        </Pressed>
        <Slot $ml={10}><Caret /></Slot>
      </Toolbar>

      <Main>
        <Library>
          <LibraryHeader>
            <Label $ls={-0.3}>Library</Label>
            <CloseX w={21} h={23} color="#000" />
          </LibraryHeader>
          <SearchBox>
            <Art w={38} h={38}>
              <circle cx="23" cy="14" r="12.5" stroke="#808080" strokeWidth="2.8" />
              <path d="M14 23L2 36" stroke="#808080" strokeWidth="3.4" />
            </Art>
            <SearchHint $ls={-0.95}>Type here to sea...</SearchHint>
            <Caret color="#000" w={26} h={14} />
          </SearchBox>
          <SearchGap />
          <Tree>
            <TreeRow $indent={21}>
              <Art w={26} h={26}>
                <rect x="1" y="2" width="23" height="23" rx="2" fill="#f6f6f6" stroke="#8d8d8d" strokeWidth="2" />
                <path d="M5 13.5H20" stroke="#3c5ba9" strokeWidth="2.4" />
              </Art>
              <Slot $ml={17}>
                <Art w={42} h={33}>
                  <rect x="1.5" y="1.5" width="39" height="25" stroke="#858585" strokeWidth="2.8" />
                  <path d="M21 26V31M11 31.3H31" stroke="#858585" strokeWidth="3" />
                </Art>
              </Slot>
              <TreeText $ml={8} $ls={-0.2}>My Computer</TreeText>
            </TreeRow>
            {MACHINES.map((m) => (
              <TreeRow key={m.name} $indent={116}>
                <VmIcon running={m.running} />
                <TreeText $ls={m.ls} $selected={m.running} $ml={7}>{m.name}</TreeText>
                {m.star && <StarSlot><Star /></StarSlot>}
              </TreeRow>
            ))}
          </Tree>
        </Library>

        <Pane>
          <Tabs>
            {TABS.map((t) => (
              <Tab key={t.name} $w={t.w} $gap={t.gap} $active={t.active}>
                <VmIcon running={t.active} />
                <TabText $ls={t.ls}>{t.name}</TabText>
                <CloseX w={27} h={25} color="#c6c6c6" sw={3.4} />
              </Tab>
            ))}
          </Tabs>
          <Letterbox />

          <Desktop>
            <DesktopItem $x={135} $y={29}>
              <RecycleBin />
              <ItemLabel $mt={8} $mr={4} $ls={0} $cjk>資源回收筒</ItemLabel>
            </DesktopItem>
            <DesktopItem $x={134} $y={394}>
              <StarWindSelected />
              <ItemLabel $mt={10} $ls={-1.5} $selected>{'StarWind\nManagement\nConsole'}</ItemLabel>
            </DesktopItem>
            <DesktopItem $x={940} $y={394}>
              <Installer />
              <ItemLabel $mt={8} $mr={5}>{'Netframework\nNDP452-KB...'}</ItemLabel>
            </DesktopItem>
            <DesktopItem $x={941} $y={785}>
              <BlankFile />
              <ItemLabel $mt={14} $mr={10} $ls={-0.9}>StarWind_Vir...</ItemLabel>
            </DesktopItem>
            <DesktopItem $x={941} $y={1140}>
              <StarWindRound w={162} h={163} />
              <ItemLabel $mt={8} $mr={8} $ls={-1.5}>starwind-v8</ItemLabel>
            </DesktopItem>
            <Cursor>
              <Art w={44} h={72} box="76 78 132 216">
                <path
                  d="M80 84L198 197H154L190 272L182 288H160L126 215L84 250Z"
                  fill="#fff"
                  stroke="#0b0b10"
                  strokeWidth="9"
                />
              </Art>
            </Cursor>
            <LanguageBar>
              <BarCell $w={93} $first>
                <Art w={56} h={50}>
                  <path d="M10 17L20 6L30 10L36 8L50 1" stroke="#8f8f8f" strokeWidth="4" />
                  <rect x="3" y="19" width="50" height="28" rx="4" fill="#c9c9c9" stroke="#8b8b8b" strokeWidth="4" />
                  <path d="M9 28H47M9 34H47" stroke="#fff" strokeWidth="3.4" strokeDasharray="4 2.5" />
                  <path d="M18 40H38" stroke="#fff" strokeWidth="3.6" />
                </Art>
              </BarCell>
              <BarCell $w={94}>
                <Art w={54} h={54}>
                  <defs>
                    <radialGradient id="help">
                      <stop offset="0" stopColor="#00007a" />
                      <stop offset=".55" stopColor="#0a0aa8" />
                      <stop offset="1" stopColor="#3a5cf0" />
                    </radialGradient>
                  </defs>
                  <circle cx="27" cy="27" r="23.5" fill="url(#help)" stroke="#6f7480" strokeWidth="5" />
                  <circle cx="27" cy="27" r="22" stroke="#dfe3ef" strokeWidth="1.6" />
                  <text x="27" y="39" fontSize="34" fontWeight="700" fontFamily="Open Sans, sans-serif" fill="#fff" textAnchor="middle">?</text>
                </Art>
              </BarCell>
              <Slot $ml={20}>
                <Art w={19} h={38}>
                  <path d="M0 0H19V7H0ZM0 27H19L9.5 38Z" fill="#000" />
                </Art>
              </Slot>
            </LanguageBar>
          </Desktop>

          <GuestTaskbar>
            <StartButton>
              <WindowsFlag />
              <StartText>開始</StartText>
            </StartButton>
            <TaskSlot $ml={66} $drop={10}><ServerManager /></TaskSlot>
            <TaskSlot $ml={68} $drop={25}><PowerShell /></TaskSlot>
            <TaskSlot $ml={64} $drop={20}><Explorer /></TaskSlot>
            <TaskSlot $ml={33} $drop={6} $pressed><ServerTools /></TaskSlot>
            <Spacer />
            <GuestTray>
              <Slot $ml={20}>
                <Art w={19} h={30}>
                  <path d="M1 12L9.5 3L18 12M1 26L9.5 17L18 26" stroke="#000" strokeWidth="4.6" />
                </Art>
              </Slot>
              <Slot $ml={36}>
                <Art w={52} h={52} box="350 188 484 489">
                  <circle cx="592" cy="431" r="228" fill="#0b4bb0" stroke="#dfe7f2" strokeWidth="16" />
                  <g transform="translate(98 62) scale(.83)"><Waves color="#a9c6ee" /></g>
                </Art>
              </Slot>
              <Slot $ml={46}>
                <Art w={57} h={55}>
                  <rect x="2" y="2" width="7" height="51" rx="2" fill="#f2f2f2" stroke="#7e7e7e" strokeWidth="2.6" />
                  <path d="M9 6Q20 2 30 8L33 15Q44 18 54 15Q52 26 45 33Q38 36 32 33L30 28Q20 30 9 31Z" fill="#fbfbfb" stroke="#7e7e7e" strokeWidth="2.6" />
                  <path d="M31 9Q35 22 32 32" stroke="#9a9a9a" strokeWidth="2.4" />
                </Art>
              </Slot>
              <Slot $ml={25}>
                <Art w={55} h={55}>
                  <rect x="16" y="9" width="36" height="37" fill="#a09e9a" stroke="#6d6d6d" strokeWidth="3" />
                  <rect x="20" y="13" width="28" height="29" stroke="#f4f4f4" strokeWidth="3" />
                  <path d="M3 11Q3 7 8 6V2H16V6Q21 7 21 11V20Q19 26 12 27Q4 26 3 20Z" fill="#f3f3f3" stroke="#6f6f6f" strokeWidth="2.6" />
                  <path d="M9 12V20M15 12V20" stroke="#777" strokeWidth="2" />
                  <path d="M10 27V52M15 27V46H24" stroke="#777" strokeWidth="3" />
                  <path d="M36 25L52 54H21Z" fill="#f3d60f" stroke="#b89a10" strokeWidth="1.6" />
                  <path d="M36.5 34V44M36.5 47V51" stroke="#111" strokeWidth="4" />
                </Art>
              </Slot>
              <Slot $ml={26}>
                <Art w={56} h={56}>
                  <path d="M3 18H11L27 2V53L11 38H3Z" fill="#f6f6f6" stroke="#8b8b8b" strokeWidth="2.8" />
                  <path d="M12 18V38" stroke="#9b9b9b" strokeWidth="2.4" />
                  <circle cx="38" cy="37.5" r="16.5" fill="#dc2a24" stroke="#e98680" strokeWidth="1.6" />
                  <path d="M31 29L45 46M45 29L31 46" stroke="#fff" strokeWidth="6" />
                </Art>
              </Slot>
              <GuestClock>下午 09:50<br />2022/1/16</GuestClock>
              <Slot $ml={16}>
                <Art w={54} h={44}>
                  <defs>
                    <linearGradient id="mon" x1="0" y1="0" x2="1" y2="1">
                      <stop offset="0" stopColor="#2a62c4" />
                      <stop offset="1" stopColor="#62a6f5" />
                    </linearGradient>
                  </defs>
                  <rect x="1" y="1" width="51" height="41" fill="#4a82c8" stroke="#a9c8ea" strokeWidth="2" />
                  <rect x="4" y="4" width="46" height="27" fill="url(#mon)" />
                  <path d="M3 32H51V40H3Z" fill="#353a42" />
                  <circle cx="12" cy="34" r="7" fill="#2f9be0" />
                  <path d="M12 34V27.500A6.500 6.500 0 0 1 18.500 34Z" fill="#8ad03a" />
                  <path d="M12 34H5.500A6.500 6.500 0 0 1 12 27.500Z" fill="#f0702a" />
                </Art>
              </Slot>
            </GuestTray>
          </GuestTaskbar>
        </Pane>
      </Main>

      <HostTaskbar>
        <PinnedApp>
          <Art w={62} h={73} box="50 513 135 219">
            <path d="M66 562C62 530 80 520 104 520H134V530L118 548L84 562Z" fill="#dd400b" />
            <path d="M134 524C166 540 182 574 180 612C178 648 168 672 134 674V658C154 650 164 630 162 604C160 574 150 556 134 546Z" fill="#cf3d10" />
            <path d="M76 576Q76 624 98 644" stroke="#cf3d10" strokeWidth="6" />
            <path d="M148 572L160 598L112 660L100 640Z" fill="#9a9a9a" />
            <path d="M110 545L124 526H132V665H110Z" fill="#e2e2e2" />
            <path d="M122 530V665H132V526Z" fill="#bcbcbc" />
            <ellipse cx="76" cy="671" rx="15" ry="20" stroke="#0f66b8" strokeWidth="13" />
            <path d="M86 650L108 655L98 680H88Z" fill="#0f66b8" />
            <ellipse cx="130" cy="698" rx="14" ry="21" stroke="#1e9fea" strokeWidth="13" />
            <path d="M110 664H132L138 682H112Z" fill="#1e9fea" />
          </Art>
          <RunningMark />
        </PinnedApp>
        <Spacer />
        <Slot $ml={0}>
          <Art w={38} h={22}><path d="M1.500 20.500L19 3L36.500 20.500" stroke="#fff" strokeWidth="3" /></Art>
        </Slot>
        <Slot $ml={27}>
          <Art w={46} h={32}>
            <path d="M12 5.500H43V29.500H7" stroke="#fff" strokeWidth="2.6" />
            <rect x="12" y="9" width="28" height="17" fill="#fff" />
            <path d="M45 12V22" stroke="#fff" strokeWidth="2.4" />
            <path d="M3 0V6M9 0V6M1 6.500H11V11Q11 15 6 16Q1 15 1 11ZM6 15V31" stroke="#fff" strokeWidth="2.2" fill="#1c1c1c" />
          </Art>
        </Slot>
        <Slot $ml={28}>
          <Art w={38} h={36}>
            <path d="M2 34C2 15 16 2 35 2" stroke="#8a8a8a" strokeWidth="2.2" />
            <path d="M9 34C9 20 20 10 35 10" stroke="#fff" strokeWidth="2.4" />
            <path d="M16 34C16 25 24 18 35 18" stroke="#fff" strokeWidth="2.4" />
            <path d="M23 34C23 29 28 25.500 35 25.500" stroke="#fff" strokeWidth="2.2" />
            <circle cx="32" cy="32" r="4" fill="#fff" />
          </Art>
        </Slot>
        <Slot $ml={24}>
          <Art w={44} h={34}>
            <path d="M2 10H8L17 2V32L8 24H2Z" stroke="#fff" strokeWidth="2.4" />
            <path d="M26 9L42 25M42 9L26 25" stroke="#fff" strokeWidth="2.4" />
          </Art>
        </Slot>
        <InputMode>英</InputMode>
        <ImeBox>ㄅ</ImeBox>
        <HostClock>下午 09:50<br />2022/1/16</HostClock>
        <Slot $ml={50}>
          <Art w={26} h={56}>
            <path d="M0 0H26V52L16 40H0Z" fill="#fff" />
            <path d="M10 10H26M10 19H26M10 28H26" stroke="#241a20" strokeWidth="2.6" />
            <circle cx="30" cy="46" r="13" fill="#5a555a" />
          </Art>
        </Slot>
      </HostTaskbar>

      <PointerArrow>
        <Art w={181} h={109}>
          <path d="M14 1L113 54L126 30L180 107L86 105L99 80L0 26Z" fill="#f00" />
        </Art>
      </PointerArrow>
    </Screen>
  );
}
